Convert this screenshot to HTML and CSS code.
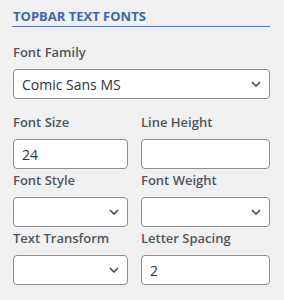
FILE: index.html
```html
<!DOCTYPE html>
<html>
<head>
<meta charset="utf-8">
<link rel="stylesheet" href="styles.css">
</head>
<body>
<div class="panel">
  <h2 class="title">TOPBAR TEXT FONTS</h2>
  <div class="field full">
    <label class="label">Font Family</label>
    <div class="box select"><span>Comic Sans MS</span><svg class="chev" width="10" height="6" viewBox="0 0 10 6"><path d="M1 1l4 4 4-4" fill="none" stroke="#3c434a" stroke-width="1.5"/></svg></div>
  </div>
  <div class="grid">
    <div class="field">
      <label class="label">Font Size</label>
      <div class="box"><span>24</span></div>
    </div>
    <div class="field">
      <label class="label">Line Height</label>
      <div class="box"></div>
    </div>
    <div class="field">
      <label class="label">Font Style</label>
      <div class="box select"><span></span><svg class="chev" width="10" height="6" viewBox="0 0 10 6"><path d="M1 1l4 4 4-4" fill="none" stroke="#3c434a" stroke-width="1.5"/></svg></div>
    </div>
    <div class="field">
      <label class="label">Font Weight</label>
      <div class="box select"><span></span><svg class="chev" width="10" height="6" viewBox="0 0 10 6"><path d="M1 1l4 4 4-4" fill="none" stroke="#3c434a" stroke-width="1.5"/></svg></div>
    </div>
    <div class="field">
      <label class="label">Text Transform</label>
      <div class="box select"><span></span><svg class="chev" width="10" height="6" viewBox="0 0 10 6"><path d="M1 1l4 4 4-4" fill="none" stroke="#3c434a" stroke-width="1.5"/></svg></div>
    </div>
    <div class="field">
      <label class="label">Letter Spacing</label>
      <div class="box"><span>2</span></div>
    </div>
  </div>
</div>
</body>
</html>
```
FILE: styles.css
```css
html, body {
  margin: 0;
  padding: 0;
  background: #f0f0f1;
}
body {
  font-family: "Open Sans", "Noto Sans", sans-serif;
  width: 284px;
  height: 300px;
  overflow: hidden;
}
.panel {
  padding: 7px 14px 0 13px;
}
.title {
  margin: 0;
  font-size: 13px;
  line-height: 18px;
  font-weight: 700;
  color: #4267a6;
  padding-bottom: 1px;
  border-bottom: 1px solid #5677b0;
  margin-left: -1px;
  padding-left: 1px;
}
.field {
  display: flex;
  flex-direction: column;
}
.field.full {
  margin-top: 15px;
}
.label {
  display: block;
  font-size: 13px;
  line-height: 20px;
  font-weight: 600;
  color: #50575e;
  margin-bottom: 7px;
  white-space: nowrap;
}
.box {
  box-sizing: border-box;
  height: 30px;
  border: 1px solid #8c8f94;
  border-radius: 4px;
  background: #fff;
  display: flex;
  align-items: center;
  justify-content: space-between;
  padding: 0 8px 0 8px;
  font-size: 14px;
  color: #2c3338;
}
.chev {
  flex: none;
}
.grid {
  display: grid;
  grid-template-columns: 115px 129px;
  column-gap: 13px;
  row-gap: 1px;
  margin-top: 13px;
}
```
